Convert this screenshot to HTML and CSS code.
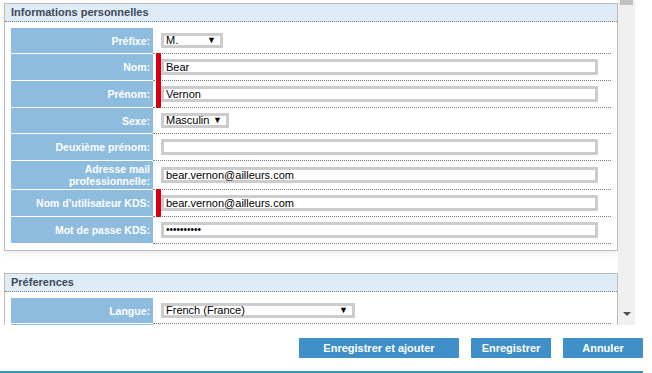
FILE: index.html
```html
<!DOCTYPE html>
<html lang="fr">

<head>
    <meta charset="UTF-8">
    <meta name="viewport" content="width=device-width, initial-scale=1.0">
    <link rel="stylesheet" href="styles.css">
    <title>Utilisateur</title>
</head>

<body>
    <div class="window">
        <div class="scroller">
            <div class="scroll-content">
                <section class="panel panel-raised">
                    <h2 class="panel-title">Informations personnelles</h2>
                    <div class="rows">
                        <div class="row row-short">
                            <div class="label">Préfixe:</div>
                            <div class="field">
                                <span class="mark"></span>
                                <div class="select select-prefix"><span>M.</span><span class="arrow">▼</span></div>
                            </div>
                        </div>
                        <div class="row">
                            <div class="label">Nom:</div>
                            <div class="field">
                                <span class="mark required"></span>
                                <div class="input">Bear</div>
                            </div>
                        </div>
                        <div class="row">
                            <div class="label">Prénom:</div>
                            <div class="field">
                                <span class="mark required"></span>
                                <div class="input">Vernon</div>
                            </div>
                        </div>
                        <div class="row row-short">
                            <div class="label">Sexe:</div>
                            <div class="field">
                                <span class="mark"></span>
                                <div class="select select-sex"><span>Masculin</span><span class="arrow">▼</span></div>
                            </div>
                        </div>
                        <div class="row">
                            <div class="label">Deuxième prénom:</div>
                            <div class="field">
                                <span class="mark"></span>
                                <div class="input"></div>
                            </div>
                        </div>
                        <div class="row">
                            <div class="label">Adresse mail<br>professionnelle:</div>
                            <div class="field">
                                <span class="mark"></span>
                                <div class="input">bear.vernon@ailleurs.com</div>
                            </div>
                        </div>
                        <div class="row">
                            <div class="label">Nom d'utilisateur KDS:</div>
                            <div class="field">
                                <span class="mark required"></span>
                                <div class="input">bear.vernon@ailleurs.com</div>
                            </div>
                        </div>
                        <div class="row">
                            <div class="label">Mot de passe KDS:</div>
                            <div class="field">
                                <span class="mark"></span>
                                <div class="input password">••••••••••</div>
                            </div>
                        </div>
                    </div>
                </section>

                <section class="panel">
                    <h2 class="panel-title">Préferences</h2>
                    <div class="rows">
                        <div class="row row-short">
                            <div class="label">Langue:</div>
                            <div class="field">
                                <span class="mark"></span>
                                <div class="select select-lang"><span>French (France)</span><span class="arrow">▼</span></div>
                            </div>
                        </div>
                        <div class="row">
                            <div class="label"></div>
                            <div class="field">
                                <span class="mark"></span>
                                <div class="input"></div>
                            </div>
                        </div>
                    </div>
                </section>
            </div>
            <div class="scrollbar">
                <div class="thumb"></div>
                <div class="down"></div>
            </div>
        </div>

        <div class="actions">
            <button class="btn btn-wide">Enregistrer et ajouter</button>
            <button class="btn">Enregistrer</button>
            <button class="btn">Annuler</button>
        </div>
        <div class="footer-line"></div>
    </div>
</body>

</html>
```

FILE: styles.css
```css
* {
    padding: 0;
    margin: 0;
    box-sizing: border-box;
}

body {
    background-color: white;
    font-family: "Liberation Sans", Arial, sans-serif;
    font-size: 11px;
}

.window {
    width: 652px;
    height: 373px;
    overflow: hidden;
}

.scroller {
    display: flex;
    height: 325px;
}

.scroll-content {
    width: 618px;
    height: 325px;
    overflow: hidden;
    padding: 3px 0 0 4px;
}

.scrollbar {
    width: 17px;
    background-color: #f0f0f0;
    display: flex;
    flex-direction: column;
    justify-content: space-between;
    align-items: center;
    padding-bottom: 9px;
}

.thumb {
    width: 13px;
    height: 5px;
    background-color: #c1c1c1;
}

.down {
    width: 0;
    height: 0;
    border-left: 4px solid transparent;
    border-right: 4px solid transparent;
    border-top: 4px solid #505050;
}

.panel {
    width: 614px;
    border: 1px solid #bcbcbc;
    background-color: white;
    padding-bottom: 6px;
}

.panel-raised {
    margin-bottom: 22px;
    box-shadow: 0 3px 6px rgba(0, 0, 0, 0.07);
}

.panel-title {
    height: 18px;
    background-color: #dfebf5;
    border-bottom: 1px dotted #7f7f7f;
    color: #3b4a5c;
    font-size: 11px;
    font-weight: bold;
    line-height: 17px;
    padding-left: 6px;
}

.rows {
    padding: 6px 6px 0 6px;
}

.row {
    display: flex;
}

.label {
    width: 142px;
    min-height: 27px;
    background-color: #8dbcdf;
    border-bottom: 1px solid white;
    color: white;
    font-weight: bold;
    font-size: 10.5px;
    line-height: 12px;
    text-align: right;
    padding: 2px 3px;
    display: flex;
    align-items: center;
    justify-content: flex-end;
}

.row-short .label {
    min-height: 26px;
}

.field {
    flex: 1;
    display: flex;
    align-items: center;
    padding-left: 3px;
    border-bottom: 1px dotted #7f7f7f;
}

.mark {
    width: 5px;
    align-self: stretch;
    margin: -1px 0;
}

.required {
    background-color: #d7000f;
}

.input {
    width: 437px;
    height: 16px;
    border: 3px solid #cccccc;
    padding-left: 2px;
    line-height: 10px;
    color: black;
    white-space: nowrap;
}

.password {
    font-size: 10px;
}

.select {
    height: 15px;
    border: 3px solid #cccccc;
    padding: 0 4px 0 2px;
    line-height: 9px;
    display: flex;
    justify-content: space-between;
    color: black;
}

.select-prefix {
    width: 62px;
}

.select-sex {
    width: 68px;
}

.select-lang {
    width: 194px;
}

.arrow {
    font-size: 9px;
}

.actions {
    display: flex;
    justify-content: flex-end;
    gap: 12px;
    padding: 13px 9px 0 0;
    height: 46px;
    width: 652px;
}

.btn {
    width: 80px;
    height: 20px;
    border: none;
    background-color: #3f8fc8;
    color: white;
    font-family: "Liberation Sans", Arial, sans-serif;
    font-weight: bold;
    font-size: 11px;
}

.btn-wide {
    width: 160px;
}

.footer-line {
    width: 643px;
    height: 2px;
    background-color: #3f8fc8;
}
```
